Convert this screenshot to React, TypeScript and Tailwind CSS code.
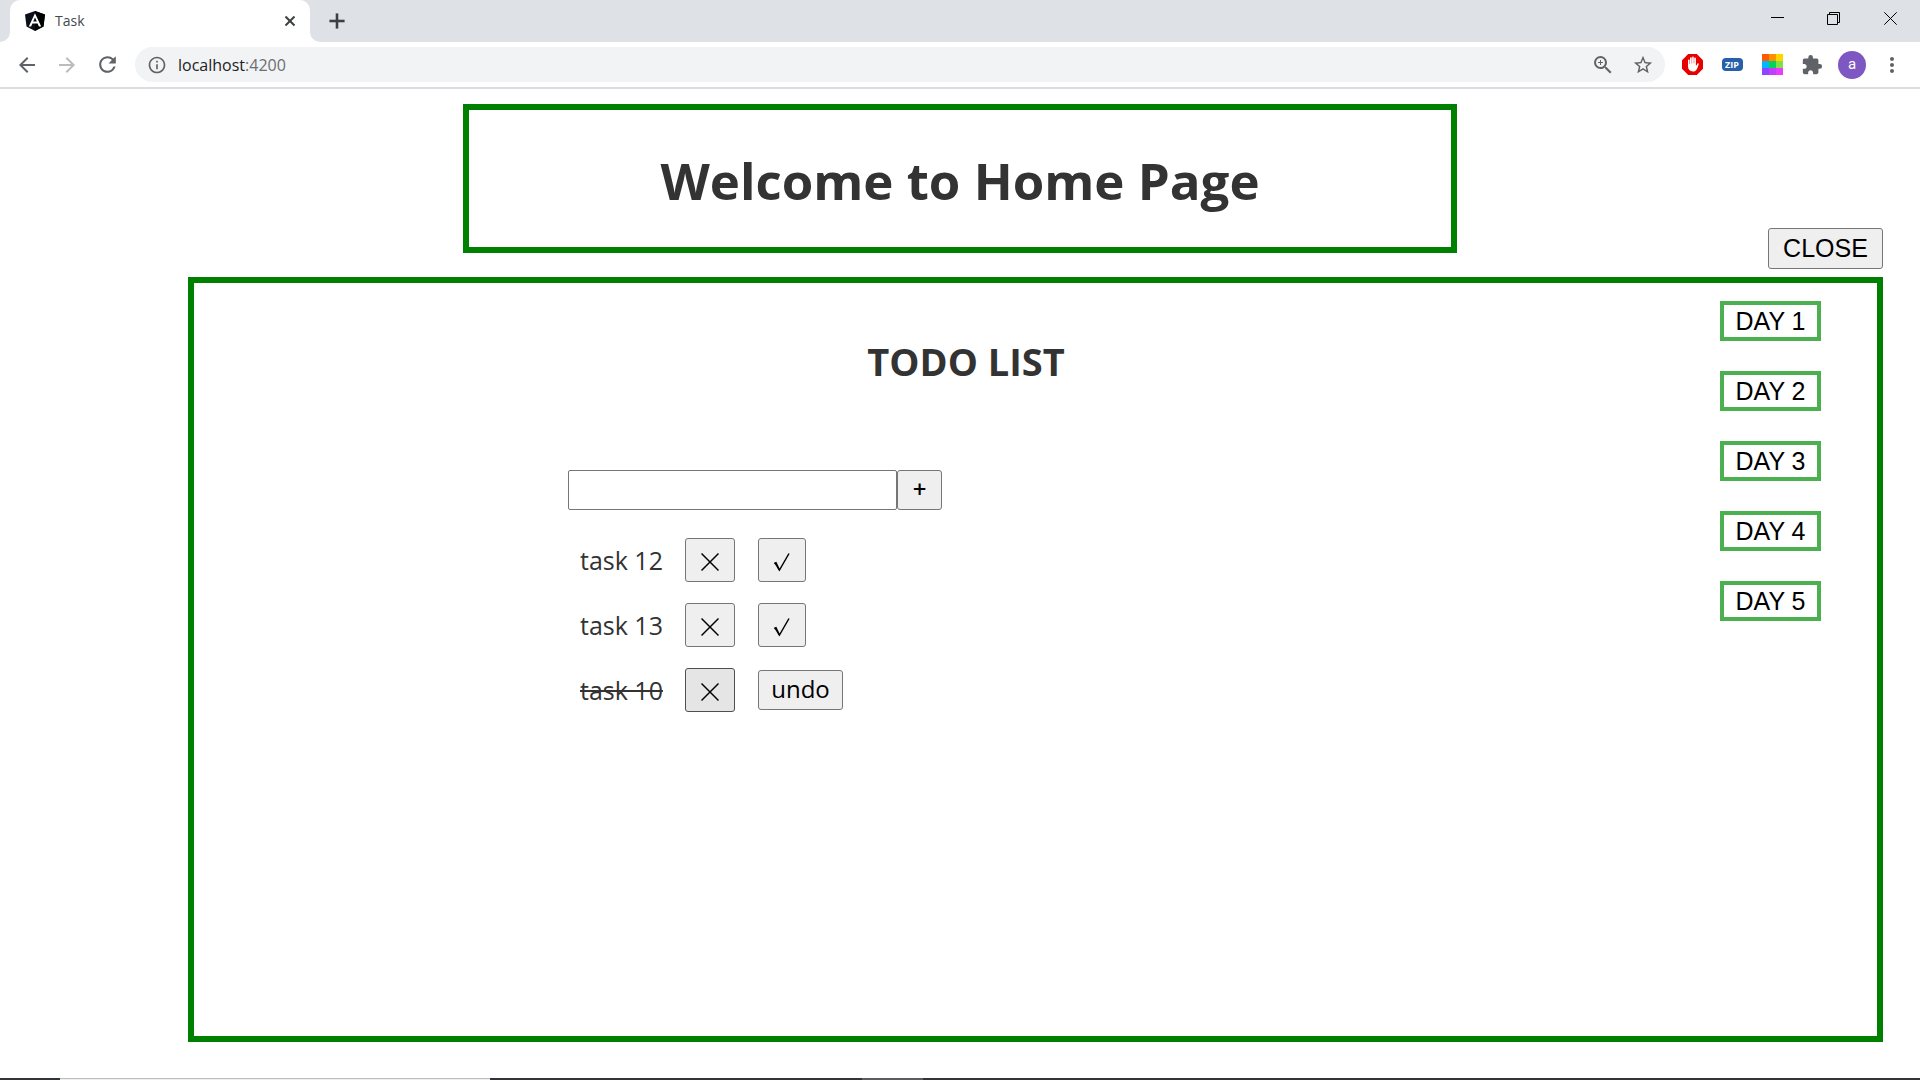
import type { ReactNode } from 'react';
import { Plus, X } from 'lucide-react';
import {
  MdArrowBack,
  MdArrowForward,
  MdExtension,
  MdInfoOutline,
  MdMoreVert,
  MdRefresh,
  MdStarBorder,
  MdZoomIn,
} from 'react-icons/md';

const tasks = [
  { name: 'task 12', done: false },
  { name: 'task 13', done: false },
  { name: 'task 10', done: true },
];

const days = ['DAY 1', 'DAY 2', 'DAY 3', 'DAY 4', 'DAY 5'];

function IconButton({ label, children }: { label: string; children: ReactNode }) {
  return (
    <button type="button" aria-label={label} className="flex size-10 shrink-0 items-center justify-center text-[#5f6368]">
      {children}
    </button>
  );
}

function AngularLogo() {
  return (
    <svg width="20" height="20" viewBox="0 0 20 20" aria-hidden="true">
      <path d="M10 0 20 3.4 18.5 15.4 10 20 1.5 15.4 0 3.4Z" fill="#0b0f1a" />
      <path d="M10 0 20 3.4 18.5 15.4 10 20Z" fill="#000" />
      <path d="M10 2.3 3.8 15.6h2.3l1.3-3.1h5.2l1.3 3.1h2.3Zm0 4.1 1.8 4.2H8.2Z" fill="#fff" fillRule="evenodd" />
    </svg>
  );
}

function AdBlockIcon() {
  return (
    <svg width="21" height="21" viewBox="0 0 21 21" aria-hidden="true">
      <path d="M6.2 0h8.6L21 6.2v8.6L14.8 21H6.2L0 14.8V6.2Z" fill="#e60000" />
      <path
        d="M6 6.2a.8.8 0 0 1 1.6 0V10h.4V4.2a.85.85 0 0 1 1.7 0V9.5h.4V3.400a.85.85 0 0 1 1.7 0V9.500h.4V4.400a.85.85 0 0 1 1.700 0v7.200l.5-.2 1-1.700c.5-.8 1.500-.3 1.300.5-.6 2.300-1.300 4-2.100 5.300-.8 1.400-1.800 2-3.600 2-3.300 0-5-2-5-5.200Z"
        fill="#fff"
      />
    </svg>
  );
}

function PaletteIcon() {
  const colors = ['#ff5a00', '#ff9100', '#ffd500', '#00b8ff', '#00d45a', '#7ee04a', '#8c46ff', '#c43cff', '#e83cff'];
  return (
    <svg width="21" height="21" viewBox="0 0 21 21" aria-hidden="true">
      {colors.map((c, i) => (
        <rect key={c} x={(i % 3) * 7} y={Math.floor(i / 3) * 7} width="7" height="7" fill={c} />
      ))}
    </svg>
  );
}

function TabStrip() {
  return (
    <div className="flex h-[42px] items-end justify-between bg-[#dee1e6]">
      <div className="flex h-full items-end">
        <svg width="10" height="10" viewBox="0 0 10 10" aria-hidden="true">
          <path d="M10 0v10H0A10 10 0 0 0 10 0Z" fill="#fff" />
        </svg>
        <div className="flex h-full w-[300px] items-center rounded-t-[10px] bg-white pr-[11px] pl-[15px]">
          <AngularLogo />
          <span className="ml-[10px] flex-1 pb-[2px] font-['Open_Sans',sans-serif] text-[14px] text-[#45494d]">Task</span>
          <button type="button" aria-label="Close tab" className="text-[#3c4043]">
            <X size={18} strokeWidth={2.7} strokeLinecap="butt" />
          </button>
        </div>
        <svg width="10" height="10" viewBox="0 0 10 10" aria-hidden="true">
          <path d="M0 0v10h10A10 10 0 0 1 0 0Z" fill="#fff" />
        </svg>
        <button type="button" aria-label="New tab" className="flex h-full items-center pl-1 text-[#3c4043]">
          <Plus size={26} strokeWidth={2.4} strokeLinecap="butt" />
        </button>
      </div>
      <div className="flex h-[37px] self-start pr-px text-black">
        <button type="button" aria-label="Minimize" className="flex w-14 items-center justify-center">
          <svg width="13" height="13" viewBox="0 0 13 13" aria-hidden="true">
            <path d="M0 5.5h13" stroke="currentColor" />
          </svg>
        </button>
        <button type="button" aria-label="Restore" className="flex w-14 items-center justify-center">
          <svg width="13" height="13" viewBox="0 0 13 13" fill="none" stroke="currentColor" aria-hidden="true">
            <path d="M.5 2.500h10v10H.5ZM2.500 2.500V.5h10v10h-2" />
          </svg>
        </button>
        <button type="button" aria-label="Close window" className="flex w-[58px] items-center justify-center">
          <svg width="13" height="13" viewBox="0 0 13 13" fill="none" stroke="currentColor" aria-hidden="true">
            <path d="M.3.3l12.400 12.400M12.700.3.3 12.700" />
          </svg>
        </button>
      </div>
    </div>
  );
}

function Toolbar() {
  return (
    <div className="flex h-[47px] items-center border-b-2 border-[#dadce0] bg-white pr-2 pl-[7px]">
      <IconButton label="Back"><MdArrowBack size={24} /></IconButton>
      <IconButton label="Forward"><MdArrowForward size={24} className="text-[#babcbe]" /></IconButton>
      <IconButton label="Reload"><MdRefresh size={25} /></IconButton>
      <div className="ml-2 flex h-[35px] flex-1 items-center rounded-full bg-[#f1f3f4] pr-[2px] pl-[12px] text-[#5f6368]">
        <MdInfoOutline size={20} />
        <span className="ml-[11px] flex-1 font-['Open_Sans',sans-serif] text-[16px] text-[#202124]">
          localhost<span className="text-[#6b6f73]">:4200</span>
        </span>
        <IconButton label="Zoom"><MdZoomIn size={24} /></IconButton>
        <IconButton label="Bookmark this page"><MdStarBorder size={22} /></IconButton>
      </div>
      <div className="ml-[7px] flex items-center">
        <IconButton label="Ad blocker"><AdBlockIcon /></IconButton>
        <IconButton label="Zip">
          <span className="flex h-[13px] w-[21px] items-center justify-center rounded-[4px] bg-[#2560a8] font-['Open_Sans',sans-serif] text-[9px] font-bold text-white">
            ZIP
          </span>
        </IconButton>
        <IconButton label="Palette"><PaletteIcon /></IconButton>
        <IconButton label="Extensions"><MdExtension size={22} /></IconButton>
        <IconButton label="Profile">
          <span className="flex size-7 items-center justify-center rounded-full bg-[#7e57c2] font-['Roboto',sans-serif] text-[15px] text-white">
            a
          </span>
        </IconButton>
        <IconButton label="Menu"><MdMoreVert size={24} /></IconButton>
      </div>
    </div>
  );
}

function TaskRow({ name, done }: { name: string; done: boolean }) {
  return (
    <li className="flex h-11 items-center">
      <span className={done ? 'w-[105px] pt-[2px] line-through' : 'w-[105px] pt-[2px]'}>{name}</span>
      <button
        type="button"
        aria-label={`Delete ${name}`}
        className={
          done
            ? 'flex h-11 w-[50px] items-center justify-center rounded-[3px] border border-[#4f4f4f] bg-[#e5e5e5] pt-px text-black'
            : 'flex h-11 w-[50px] items-center justify-center rounded-[3px] border border-[#767676] bg-[#efefef] pt-px text-black'
        }
      >
        <svg width="18" height="24" viewBox="0 0 18 24" fill="none" stroke="currentColor" strokeWidth="1.5" aria-hidden="true">
          <path d="M.5 4.500l17 17M17.500 4.500l-17 17" />
        </svg>
      </button>
      {done ? (
        <button type="button" className="ml-[23px] h-10 w-[85px] rounded-[3px] border border-[#767676] bg-[#efefef] pb-[2px] text-[24px] leading-8 text-black">
          undo
        </button>
      ) : (
        <button
          type="button"
          aria-label={`Complete ${name}`}
          className="ml-[23px] flex h-11 w-12 items-center justify-center rounded-[3px] border border-[#767676] bg-[#efefef] pt-px text-black"
        >
          <svg width="18" height="24" viewBox="0 0 18 24" fill="none" stroke="currentColor" aria-hidden="true">
            <path d="M1.200 14.500 3 13.800 6.500 21 16 4.500" strokeWidth="1.500" />
            <path d="M2.200 14.500 6.300 21.200" strokeWidth="1.200" />
          </svg>
        </button>
      )}
    </li>
  );
}

export default function App() {
  return (
    <div className="flex min-h-screen flex-col bg-white font-['Open_Sans',sans-serif] text-[25px] text-[#333]">
      <TabStrip />
      <Toolbar />
      <header className="mx-auto mt-[15px] w-full max-w-[994px] border-[6px] border-[#008000] pt-[38px] pb-[34px] text-center">
        <h1 className="text-[51px] leading-[65px] font-bold">Welcome to Home Page</h1>
      </header>
      <div className="-mt-[25px] mr-[37px] flex justify-end font-['Liberation_Sans',sans-serif]">
        <button type="button" className="h-[41px] w-[115px] rounded-[3px] border border-[#767676] bg-[#efefef] text-black">
          CLOSE
        </button>
      </div>
      <main className="mt-2 mr-[37px] mb-9 ml-[188px] flex flex-1 border-[6px] border-[#008000]">
        <section className="flex-1 pt-[53px] pl-[18px]">
          <h2 className="text-center text-[38px] leading-[50px] font-bold">TODO LIST</h2>
          <form className="mt-[84px] ml-[356px] flex" onSubmit={(e) => e.preventDefault()}>
            <input
              type="text"
              aria-label="New task"
              className="h-10 w-[329px] rounded-[2px] border border-[#767676] bg-white px-2"
            />
            <button type="submit" aria-label="Add task" className="h-10 w-[45px] rounded-[3px] border border-[#767676] bg-[#efefef] pb-[2px] text-[24px] leading-8 font-semibold text-black">
              +
            </button>
          </form>
          <ul className="mt-7 ml-[368px] flex flex-col gap-[21px]">
            {tasks.map((t) => (
              <TaskRow key={t.name} name={t.name} done={t.done} />
            ))}
          </ul>
        </section>
        <nav aria-label="Days" className="mr-14 flex flex-col gap-[30px] pt-[18px] font-['Liberation_Sans',sans-serif]">
          {days.map((d) => (
            <button key={d} type="button" className="h-10 w-[101px] border-4 border-[#4caf50] bg-white leading-8 text-black">
              {d}
            </button>
          ))}
        </nav>
      </main>
      <footer className="flex h-[2px] bg-[#333438]">
        <div className="ml-[60px] w-[430px] border-t border-[#bdbdbd] bg-[#efefef]" />
        <div className="ml-[372px] w-[61px] bg-[#5c5d60]" />
      </footer>
    </div>
  );
}
